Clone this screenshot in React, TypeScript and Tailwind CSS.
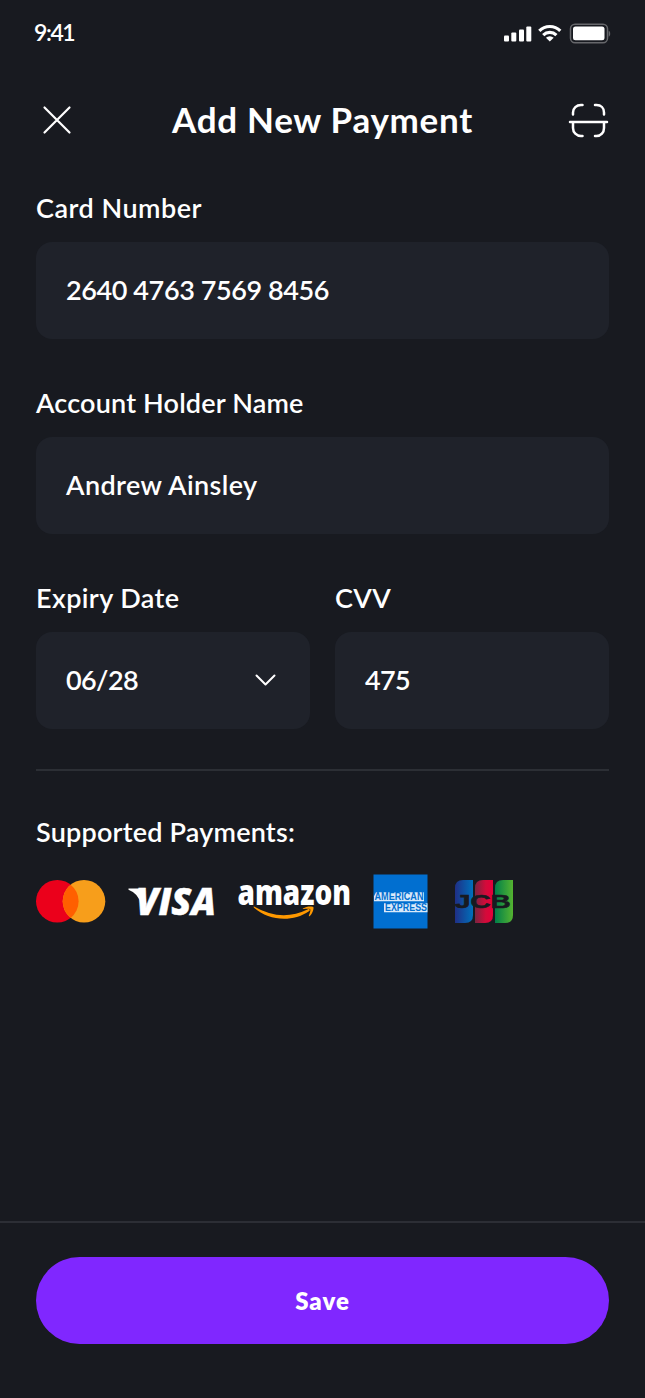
import type { ReactNode } from 'react';

function StatusBar() {
  return (
    <div className="flex h-[66px] items-center justify-between pl-[34px] pr-[34px]">
      <span className="mt-[-2px] text-[23px] font-semibold leading-[30px] tracking-[-1.4px]">9:41</span>
      <svg width="109" height="24" viewBox="502 21.500 109 24" fill="#fff" aria-hidden="true">
        <rect x="504" y="36" width="5" height="6" rx="1" />
        <rect x="511.3" y="33" width="5" height="9" rx="1" />
        <rect x="519" y="30" width="5" height="12" rx="1" />
        <rect x="526.3" y="27" width="5" height="15" rx="1" />
        <g fill="none" stroke="#fff" strokeWidth="3.2">
          <path d="M539.3 31.3a15 15 0 0 1 21 0" />
          <path d="M543.2 35.6a9.6 9.6 0 0 1 13.2 0" />
        </g>
        <path d="M549.8 42l-3.9-3.7a5.8 5.8 0 0 1 7.8 0z" />
        <rect x="570.5" y="24.7" width="37" height="18.6" rx="4.5" fill="none" stroke="#66676b" strokeWidth="1.5" />
        <rect x="573" y="27" width="31.5" height="13.8" rx="2.5" />
        <path d="M608.7 31.2c2 .6 2 5.200 0 6z" fill="#66676b" />
      </svg>
    </div>
  );
}

function Header() {
  return (
    <header className="flex h-[108px] items-center justify-between px-9">
      <svg width="42" height="42" viewBox="0 0 42 42" fill="none" stroke="#fff" strokeWidth="2.2" strokeLinecap="round" aria-label="Close">
        <path d="M8.500 8.500l25 25M33.500 8.500l-25 25" />
      </svg>
      <h1 className="mt-[-3px] text-[35px] font-bold leading-[42px] tracking-[0.7px]">Add New Payment</h1>
      <svg width="42" height="42" viewBox="567 99 42 42" fill="none" stroke="#fff" strokeWidth="2.500" strokeLinecap="round" aria-label="Scan">
        <path d="M573 114.500v-2c0-4.500 3.500-7.500 8-7.500h1.500M595 105h1.500c4.500 0 7.500 3 7.500 7.500v2M573 123v5c0 4.500 3.500 8 8 8h1.500M595 136h1.500c4.500 0 7.500-3.500 7.500-8v-5M570 122h37" />
      </svg>
    </header>
  );
}

function Field({ label, labelClass, children }: { label: string; labelClass: string; children: ReactNode }) {
  return (
    <div className="flex flex-1 flex-col">
      <span className={`h-[68px] pt-[17px] text-[27px] font-semibold leading-[34px] ${labelClass}`}>{label}</span>
      <div className="flex h-[97px] items-center justify-between rounded-[16px] bg-[#1f222a] px-[30px] pb-px text-[27px] font-semibold leading-[34px]">
        {children}
      </div>
    </div>
  );
}

function Logos() {
  return (
    <div className="flex h-[55px] items-center">
      <svg width="70" height="46" viewBox="36 879 70 46" aria-label="Mastercard">
        <circle cx="57.300" cy="901.300" r="21.300" fill="#eb001b" />
        <circle cx="84" cy="901.300" r="21.300" fill="#f79e1b" />
        <path d="M70.650 884.700a21.300 21.300 0 0 1 0 33.200a21.300 21.300 0 0 1 0-33.200z" fill="#ff5f00" />
      </svg>
      <svg className="ml-[20px]" width="92" height="60" viewBox="126 871.500 92 60" fill="#fff">
        <path d="M128.500 888h11.500q3 0 3.600 3l3 13-5.500 0q-2.500-11-12.600-14.800z" />
        <text x="136" y="914.800" stroke="#fff" strokeWidth=".5" fontFamily="Open Sans" fontStyle="italic" fontWeight="800" fontSize="37" textLength="80" lengthAdjust="spacingAndGlyphs">VISA</text>
      </svg>
      <svg className="ml-[16px]" width="120" height="60" viewBox="234 871.500 120 60">
        <text x="237.500" y="904.500" fill="#fff" fontFamily="Open Sans" fontWeight="800" fontSize="34.500" textLength="113.500" lengthAdjust="spacingAndGlyphs">amazon</text>
        <path d="M254.500 906.200q27 15.500 53.500 2.500c1.700-.7 2.500.8 1 2-17 11.500-40 9.500-55-3.500-.8-.7-.3-1.400.5-1z" fill="#f90" />
        <path d="M303 908c3-2.500 9.500-2.500 10.300-1.500.8 1.200-.5 6.500-3.500 9-.8.600-1.200.3-.9-.6 1-2.400 1.900-5.500 1.300-6.100-.8-.8-4.500-.5-6.500-.2-.9.100-1.200-.2-.7-.6z" fill="#f90" />
      </svg>
      <svg className="ml-[17px]" width="59" height="55" viewBox="371 874 59 55">
        <rect x="373.500" y="874.500" width="54" height="54" fill="#016fd0" />
        <path d="M376 892.300h48v9h-50v-5zM384 903.200h43.500v9H384z" fill="#d9eafa" />
        <g fontFamily="Liberation Sans" fontWeight="700" fontSize="10" fill="#016fd0">
          <text x="374.500" y="900.400" textLength="49" lengthAdjust="spacingAndGlyphs">AMERICAN</text>
          <text x="385" y="911.400" textLength="42" lengthAdjust="spacingAndGlyphs">EXPRESS</text>
        </g>
      </svg>
      <svg className="ml-[24px]" width="60" height="46" viewBox="454 879 60 46">
        <defs>
          <linearGradient id="jcb-blue"><stop stopColor="#1f2f86" /><stop offset="1" stopColor="#0070bb" /></linearGradient>
          <linearGradient id="jcb-red"><stop stopColor="#7a2440" /><stop offset=".6" stopColor="#d40a3a" /><stop offset="1" stopColor="#e4003a" /></linearGradient>
          <linearGradient id="jcb-green"><stop stopColor="#007f49" /><stop offset="1" stopColor="#55b330" /></linearGradient>
        </defs>
        <path d="M455 888q0-8 8-8h10v35q0 8-8 8h-10z" fill="url(#jcb-blue)" />
        <path d="M475 888q0-8 8-8h10v35q0 8-8 8h-10z" fill="url(#jcb-red)" />
        <path d="M495 888q0-8 8-8h10v35q0 8-8 8h-10z" fill="url(#jcb-green)" />
        <g fill="#181a20" stroke="#181a20" strokeWidth=".6" fontFamily="Liberation Sans" fontWeight="700" fontSize="18">
          <text x="455" y="907.800" textLength="55.500" lengthAdjust="spacingAndGlyphs">JCB</text>
        </g>
      </svg>
    </div>
  );
}

export default function App() {
  return (
    <div className="flex h-[1398px] w-[645px] flex-col bg-[#181a20] font-['Lato',sans-serif] text-white">
      <StatusBar />
      <Header />
      <main className="flex flex-1 flex-col px-9">
        <div className="flex flex-col gap-[30px]">
          <Field label="Card Number" labelClass="tracking-[0.5px]">
            <span className="tracking-[-0.4px]">2640 4763 7569 8456</span>
          </Field>
          <Field label="Account Holder Name" labelClass="tracking-[0.17px]">
            <span className="tracking-[0.4px]">Andrew Ainsley</span>
          </Field>
          <div className="flex gap-[25px]">
            <Field label="Expiry Date" labelClass="tracking-[0.4px]">
              <span className="tracking-[-0.6px]">06/28</span>
              <svg width="30" height="30" viewBox="0 0 30 30" fill="none" stroke="#fff" strokeWidth="2" strokeLinecap="round" strokeLinejoin="round" aria-hidden="true">
                <path d="M6.500 10.500l9 9 9-9" />
              </svg>
            </Field>
            <Field label="CVV" labelClass="tracking-[0.4px]">
              <span className="tracking-[-0.7px]">475</span>
            </Field>
          </div>
        </div>
        <div className="mt-[40px] h-[2px] bg-[#2c2f35]" />
        <h2 className="mb-[25px] mt-[44px] text-[27px] font-semibold leading-[34px] tracking-[0.2px]">Supported Payments:</h2>
        <Logos />
      </main>
      <footer className="h-[177px] border-t-2 border-[#2c2e35] px-9 pt-[34px]">
        <button className="h-[87px] w-full rounded-full bg-[#8027ff] pt-px text-[24px] font-extrabold tracking-[1px]">Save</button>
      </footer>
    </div>
  );
}
